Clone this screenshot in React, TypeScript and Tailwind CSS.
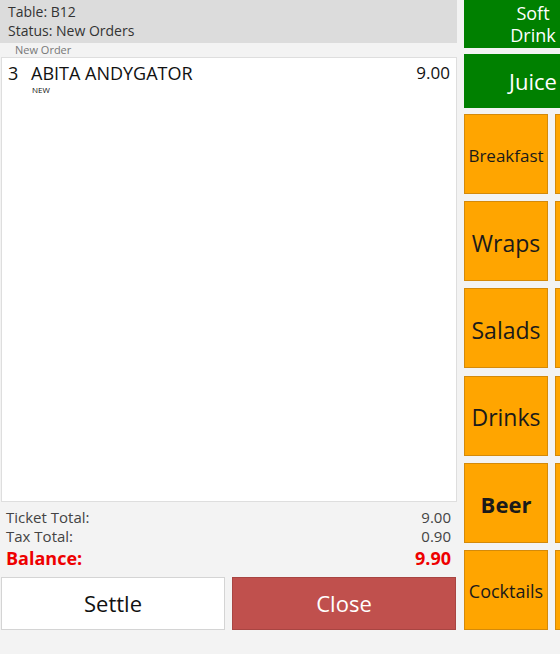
import React from "react";

const cats: { label: string; cls: string }[] = [
  { label: "Breakfast", cls: "text-[17px]" },
  { label: "Wraps", cls: "text-[23px]" },
  { label: "Salads", cls: "text-[23px]" },
  { label: "Drinks", cls: "text-[23px]" },
  { label: "Beer", cls: "text-[22px] font-bold" },
  { label: "Cocktails", cls: "text-[18px]" },
];

export default function App() {
  return (
    <div
      className="w-[560px] h-[654px] bg-[#f3f3f3] flex overflow-hidden"
      style={{ fontFamily: '"Open Sans", "Noto Sans", sans-serif' }}
    >
      {/* Left ticket panel */}
      <div className="w-[457px] flex flex-col">
        <div className="h-[43px] bg-[#dcdcdc] px-[8px] pt-[2px] text-[14px] leading-[19px] text-[#333]">
          <div>Table: B12</div>
          <div>Status: New Orders</div>
        </div>
        <div className="h-[14px] bg-[#f3f3f3] pl-[15px] text-[11px] leading-[14px] text-[#777]">
          New Order
        </div>
        <div className="h-[445px] bg-white border border-[#dedede] ml-[1px]">
          <div className="flex items-start pt-[5px] pr-[6px] text-[18px] leading-[20px] text-[#111]">
            <div className="w-[29px] pl-[6px]">3</div>
            <div className="flex-1">
              <div>ABITA ANDYGATOR</div>
              <div className="text-[8px] leading-[9px] pl-[1px] mt-[2px]">NEW</div>
            </div>
            <div className="text-[17px]">9.00</div>
          </div>
        </div>
        <div className="pl-[6px] pr-[6px] pt-[6px] text-[15px] leading-[18px] text-[#444]">
          <div className="flex justify-between">
            <span>Ticket Total:</span>
            <span>9.00</span>
          </div>
          <div className="flex justify-between mt-[1px]">
            <span>Tax Total:</span>
            <span>0.90</span>
          </div>
          <div className="flex justify-between mt-[3px] text-[18px] leading-[21px] font-bold text-[#ee0000]">
            <span>Balance:</span>
            <span>9.90</span>
          </div>
        </div>
        <div className="flex gap-[7px] mt-[8px] pl-[1px] pr-[1px]">
          <button className="w-[224px] h-[53px] bg-white border border-[#d4d4d4] text-[22px] text-[#111]">
            Settle
          </button>
          <button className="w-[224px] h-[53px] bg-[#c0504d] border border-[#a84542] text-[22px] text-white">
            Close
          </button>
        </div>
      </div>

      {/* Right category panel */}
      <div className="ml-[7px] w-[96px] overflow-hidden shrink-0">
        <div className="w-[200px] flex flex-col">
          <div className="w-[138px] h-[48px] bg-[#008000] text-white text-[18px] leading-[22px] flex flex-col items-center justify-center">
            <span>Soft</span>
            <span>Drink</span>
          </div>
          <div className="w-[138px] h-[54px] mt-[6px] bg-[#008000] text-white text-[22px] flex items-center justify-center">
            Juice
          </div>
          <div className="grid grid-cols-[84px_84px] gap-x-[7px] gap-y-[7.2px] mt-[6px]">
            {cats.map((c) => (
              <React.Fragment key={c.label}>
                <div
                  className={`h-[80px] bg-[#ffa500] border border-[#d48a0a] flex items-center justify-center pt-[4px] text-[#1a1a1a] ${c.cls}`}
                >
                  {c.label}
                </div>
                <div className="h-[80px] bg-[#ffa500] border border-[#d48a0a]" />
              </React.Fragment>
            ))}
          </div>
        </div>
      </div>
    </div>
  );
}
